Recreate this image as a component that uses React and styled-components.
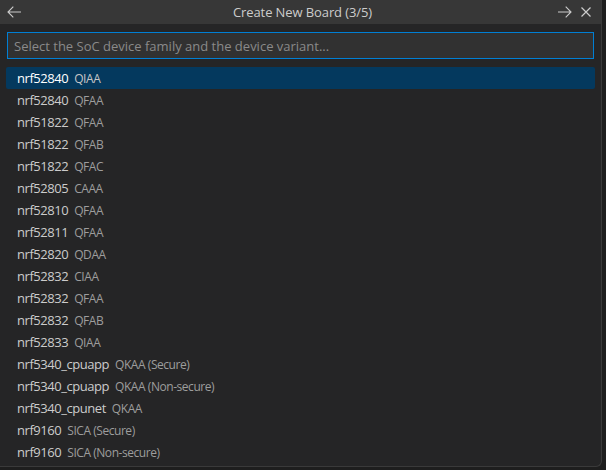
import React from 'react'
import styled, { createGlobalStyle } from 'styled-components'

const GlobalStyle = createGlobalStyle`
    html, body {
        margin: 0;
        padding: 0;
        background: #1e1e1e;
    }
    body {
        font-family: "Open Sans", "Noto Sans", "Liberation Sans", sans-serif;
    }
`

const Widget = styled.div`
    width: 602px;
    height: 467px;
    background: #252526;
    border-right: 1px solid #3a3a3a;
    border-bottom: 1px solid #3a3a3a;
    border-bottom-right-radius: 6px;
    box-sizing: border-box;
    overflow: hidden;
    display: flex;
    flex-direction: column;
`

const TitleBar = styled.div`
    height: 24px;
    background: #373737;
    display: flex;
    align-items: center;
    justify-content: space-between;
    padding: 0 6px 0 5px;
    color: #cccccc;
    font-size: 13px;
`

const Title = styled.div`
    flex: 1;
    text-align: center;
    padding-left: 26px;
    letter-spacing: -0.1px;
`

const Actions = styled.div`
    display: flex;
    align-items: center;
    gap: 3px;
`

const IconButton = styled.div`
    width: 18px;
    height: 18px;
    display: flex;
    align-items: center;
    justify-content: center;
    color: #cccccc;
`

const InputRow = styled.div`
    padding: 8px 7px 8px 7px;
`

const Input = styled.input`
    width: 100%;
    height: 27px;
    box-sizing: border-box;
    background: #313131;
    border: 1px solid #007fd4;
    outline: none;
    color: #cccccc;
    font-family: inherit;
    font-size: 13px;
    padding: 0 6px;
    &::placeholder {
        color: #8a8a8a;
    }
`

const List = styled.div`
    display: flex;
    flex-direction: column;
    padding: 0 6px;
`

const Row = styled.div`
    height: 22px;
    display: flex;
    align-items: center;
    padding-left: 11px;
    background: ${p => (p.selected ? '#04395e' : 'transparent')};
    border-radius: 2px;
`

const Label = styled.span`
    color: ${p => (p.selected ? '#ffffff' : '#cccccc')};
    font-size: 13px;
    letter-spacing: -0.45px;
`

const Description = styled.span`
    color: ${p => (p.selected ? '#c6c6c6' : '#9d9d9d')};
    font-size: 12px;
    margin-left: 6px;
    letter-spacing: -0.45px;
`

const items = [
    ['nrf52840', 'QIAA'],
    ['nrf52840', 'QFAA'],
    ['nrf51822', 'QFAA'],
    ['nrf51822', 'QFAB'],
    ['nrf51822', 'QFAC'],
    ['nrf52805', 'CAAA'],
    ['nrf52810', 'QFAA'],
    ['nrf52811', 'QFAA'],
    ['nrf52820', 'QDAA'],
    ['nrf52832', 'CIAA'],
    ['nrf52832', 'QFAA'],
    ['nrf52832', 'QFAB'],
    ['nrf52833', 'QIAA'],
    ['nrf5340_cpuapp', 'QKAA (Secure)'],
    ['nrf5340_cpuapp', 'QKAA (Non-secure)'],
    ['nrf5340_cpunet', 'QKAA'],
    ['nrf9160', 'SICA (Secure)'],
    ['nrf9160', 'SICA (Non-secure)'],
]

// codicon-ish arrows, 14px wide
const ArrowLeft = () => (
    <svg width="16" height="16" viewBox="0 0 16 16" fill="none" stroke="currentColor" strokeWidth="1.1">
        <path d="M15 8H2M7.3 2.7L2 8L7.3 13.3" />
    </svg>
)

const ArrowRight = () => (
    <svg width="16" height="16" viewBox="0 0 16 16" fill="none" stroke="currentColor" strokeWidth="1.1">
        <path d="M1 8h13M8.7 2.7L14 8L8.7 13.3" />
    </svg>
)

const Close = () => (
    <svg width="16" height="16" viewBox="0 0 16 16" fill="none" stroke="currentColor" strokeWidth="1.2">
        <path d="M3.5 3.5l9 9M12.5 3.5l-9 9" />
    </svg>
)

export default function App() {
    return (
        <>
            <GlobalStyle />
            <Widget>
                <TitleBar>
                    <IconButton><ArrowLeft /></IconButton>
                    <Title>Create New Board (3/5)</Title>
                    <Actions>
                        <IconButton><ArrowRight /></IconButton>
                        <IconButton><Close /></IconButton>
                    </Actions>
                </TitleBar>
                <InputRow>
                    <Input placeholder="Select the SoC device family and the device variant..." />
                </InputRow>
                <List>
                    {items.map(([name, variant], i) => (
                        <Row key={i} selected={i === 0}>
                            <Label selected={i === 0}>{name}</Label>
                            <Description selected={i === 0}>{variant}</Description>
                        </Row>
                    ))}
                </List>
            </Widget>
        </>
    )
}
